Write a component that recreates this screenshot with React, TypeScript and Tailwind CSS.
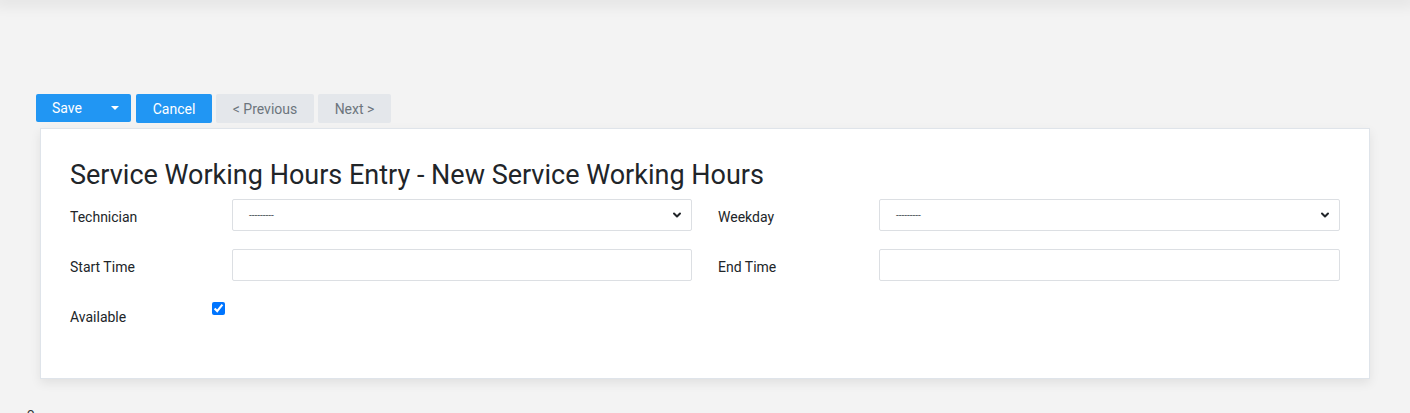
import { ChevronDown } from "lucide-react";

const rows = [
  { left: "Technician", leftKind: "select", right: "Weekday", rightKind: "select" },
  { left: "Start Time", leftKind: "input", right: "End Time", rightKind: "input" },
];

function Field({ kind }: { kind: string }) {
  if (kind === "select") {
    return (
      <div className="flex-1 h-8 flex items-center justify-between pl-4 pr-2 border border-[#dcdfe3] rounded-[2px] bg-white">
        <span className="text-[10px] text-[#495057]">---------</span>
        <ChevronDown className="w-3 h-3 text-[#212529]" strokeWidth={4} />
      </div>
    );
  }
  return <div className="flex-1 h-8 border border-[#dcdfe3] rounded-[2px] bg-white" />;
}

export default function App() {
  return (
    <div className="min-h-[413px] bg-[#f3f3f3] overflow-hidden font-['Roboto',sans-serif] text-[#212529]">
      <div className="h-0 shadow-[0_0_14px_6px_rgba(0,0,0,0.07)]" />
      <div className="pt-[94px] pl-9 flex gap-[5px] text-sm">
        <div className="flex h-[28px] rounded-[2px] overflow-hidden bg-[#2196f3] text-white">
          <span className="pl-4 w-[62px] flex items-center">Save</span>
          <span className="w-[33px] flex items-center justify-center">
            <span className="border-x-[4px] border-x-transparent border-t-[4px] border-t-white" />
          </span>
        </div>
        <div className="h-[29px] w-[76px] flex items-center justify-center rounded-[2px] bg-[#2196f3] text-white">Cancel</div>
        <div className="h-[29px] w-[98px] -ml-[1px] flex items-center justify-center rounded-[2px] bg-[#e4e7eb] text-[#6c757d]">&lt; Previous</div>
        <div className="h-[29px] w-[73px] -ml-[1px] flex items-center justify-center rounded-[2px] bg-[#e4e7eb] text-[#6c757d]">Next &gt;</div>
      </div>
      <div className="mt-[5px] ml-10 w-[1330px] h-[251px] bg-white border border-[#dfe4ea] shadow-[0_4px_10px_rgba(0,0,0,0.08)] pl-[29px] pr-[29px] pt-[28px]">
        <h1 className="text-[27px] leading-[36px] text-[#212529]">Service Working Hours Entry - New Service Working Hours</h1>
        <div className="mt-[6px] flex flex-col gap-[18px]">
          {rows.map((r) => (
            <div key={r.left} className="flex items-center">
              <div className="flex-1 flex items-center">
                <span className="w-[162px] text-sm pt-[3px]">{r.left}</span>
                <Field kind={r.leftKind} />
              </div>
              <div className="flex-1 flex items-center pl-[26px]">
                <span className="w-[161px] text-sm pt-[3px]">{r.right}</span>
                <Field kind={r.rightKind} />
              </div>
            </div>
          ))}
          <div className="flex items-start h-8">
            <span className="w-[142px] text-sm pt-[8px]">Available</span>
            <input type="checkbox" defaultChecked className="w-[13px] h-[13px] mt-[3px] accent-[#0075ff]" />
          </div>
        </div>
      </div>
      <div className="pl-[27px] pt-[26px] text-[13px] leading-4 text-[#333]">o</div>
    </div>
  );
}
